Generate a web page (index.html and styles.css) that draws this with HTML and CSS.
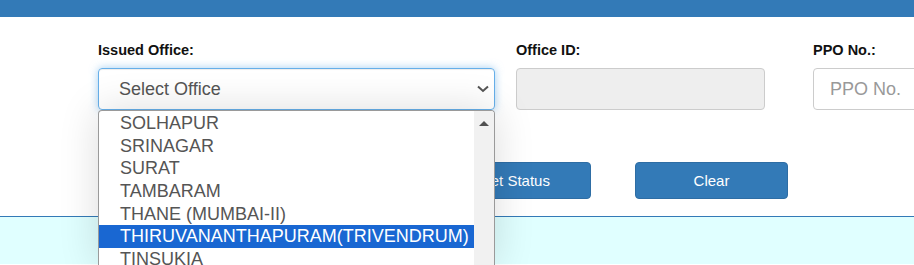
FILE: index.html
```html
<!DOCTYPE html>
<html lang="en">
<head>
    <meta charset="UTF-8">
    <meta name="viewport" content="width=device-width, initial-scale=1.0">
    <title>Pension Status</title>
    <link rel="stylesheet" href="styles.css">
</head>
<body>
    <div class="top-bar"></div>

    <div class="search-panel">
        <div class="field-row">
            <div class="field field-office">
                <label class="field-label">Issued Office:</label>
                <div class="select-box">
                    <span class="select-text">Select Office</span>
                    <svg class="select-chevron" width="12" height="8" viewBox="0 0 12 8">
                        <path d="M1 1.5 L6 6 L11 1.5" fill="none" stroke="#555" stroke-width="2"/>
                    </svg>
                </div>

                <!-- opened office list -->
                <div class="office-list">
                    <ul class="office-options">
                        <li>SOLHAPUR</li>
                        <li>SRINAGAR</li>
                        <li>SURAT</li>
                        <li>TAMBARAM</li>
                        <li>THANE (MUMBAI-II)</li>
                        <li class="active">THIRUVANANTHAPURAM(TRIVENDRUM)</li>
                        <li>TINSUKIA</li>
                    </ul>
                    <div class="list-scrollbar">
                        <span class="scroll-up"></span>
                    </div>
                </div>
            </div>

            <div class="field field-id">
                <label class="field-label">Office ID:</label>
                <div class="text-input disabled"></div>
            </div>

            <div class="field field-ppo">
                <label class="field-label">PPO No.:</label>
                <div class="text-input"><span class="placeholder">PPO No.</span></div>
            </div>
        </div>

        <div class="button-row">
            <button class="btn">Get Status</button>
            <button class="btn">Clear</button>
        </div>
    </div>

    <div class="result-panel"></div>
</body>
</html>
```

FILE: styles.css
```css
* {
    margin: 0;
    padding: 0;
    box-sizing: border-box;
}

html, body {
    overflow: hidden;
}

body {
    font-family: 'Liberation Sans', Arial, sans-serif;
    background: #ffffff;
    color: #222222;
    height: 265px;
}

.top-bar {
    height: 17px;
    background: #337ab7;
}

.search-panel {
    height: 199px;
    padding: 23px 0 0 98px;
}

.field-row {
    display: flex;
}

.field {
    position: relative;
    flex-shrink: 0;
}

.field-office {
    width: 397px;
}

.field-id {
    width: 249px;
    margin-left: 21px;
}

.field-ppo {
    width: 101px;
    margin-left: 48px;
    overflow: hidden;
}

.field-ppo .text-input {
    width: 249px;
}

.field-label {
    display: block;
    font-size: 14.5px;
    font-weight: bold;
    line-height: 20px;
    margin-bottom: 8px;
    color: #111111;
    white-space: nowrap;
}

.select-box {
    height: 42px;
    border: 1px solid #66afe9;
    border-radius: 4px;
    box-shadow: inset 0 1px 1px rgba(0, 0, 0, 0.075), 0 0 8px rgba(102, 175, 233, 0.6);
    display: flex;
    align-items: center;
    justify-content: space-between;
    padding: 0 5px 0 20px;
    font-size: 18px;
    color: #555555;
}

.text-input {
    height: 42px;
    border: 1px solid #cccccc;
    border-radius: 4px;
    display: flex;
    align-items: center;
    padding: 0 0 0 16px;
    font-size: 18px;
}

.text-input.disabled {
    background: #eeeeee;
}

.placeholder {
    color: #999999;
}

.office-list {
    position: absolute;
    left: 0;
    top: 100%;
    width: 397px;
    height: 156px;
    background: #ffffff;
    border: 1px solid #9a9a9a;
    border-bottom: none;
    border-radius: 4px 4px 0 0;
    box-shadow: 0 0 40px rgba(0, 0, 0, 0.14);
    display: flex;
    overflow: hidden;
    z-index: 10;
}

.office-options {
    list-style: none;
    flex: 1;
    margin-top: 1px;
}

.office-options li {
    height: 22.7px;
    line-height: 22.7px;
    padding-left: 21px;
    font-size: 18px;
    color: #555555;
    white-space: nowrap;
}

.office-options li.active {
    background: #1967d2;
    color: #ffffff;
}

.list-scrollbar {
    width: 20px;
    background: #f1f1f1;
    display: flex;
    justify-content: center;
    padding-top: 10px;
}

.scroll-up {
    width: 0;
    height: 0;
    border-left: 5px solid transparent;
    border-right: 5px solid transparent;
    border-bottom: 5px solid #505050;
}

.button-row {
    display: flex;
    gap: 44px;
    margin: 52px 0 0 340px;
}

.btn {
    width: 153px;
    height: 37px;
    background: #337ab7;
    border: 1px solid #2e6da4;
    border-radius: 4px;
    color: #ffffff;
    font-family: 'Liberation Sans', Arial, sans-serif;
    font-size: 15px;
    padding-bottom: 1px;
}

.result-panel {
    height: 48px;
    border-top: 1px solid #337ab7;
    background: #e0ffff;
}
```
